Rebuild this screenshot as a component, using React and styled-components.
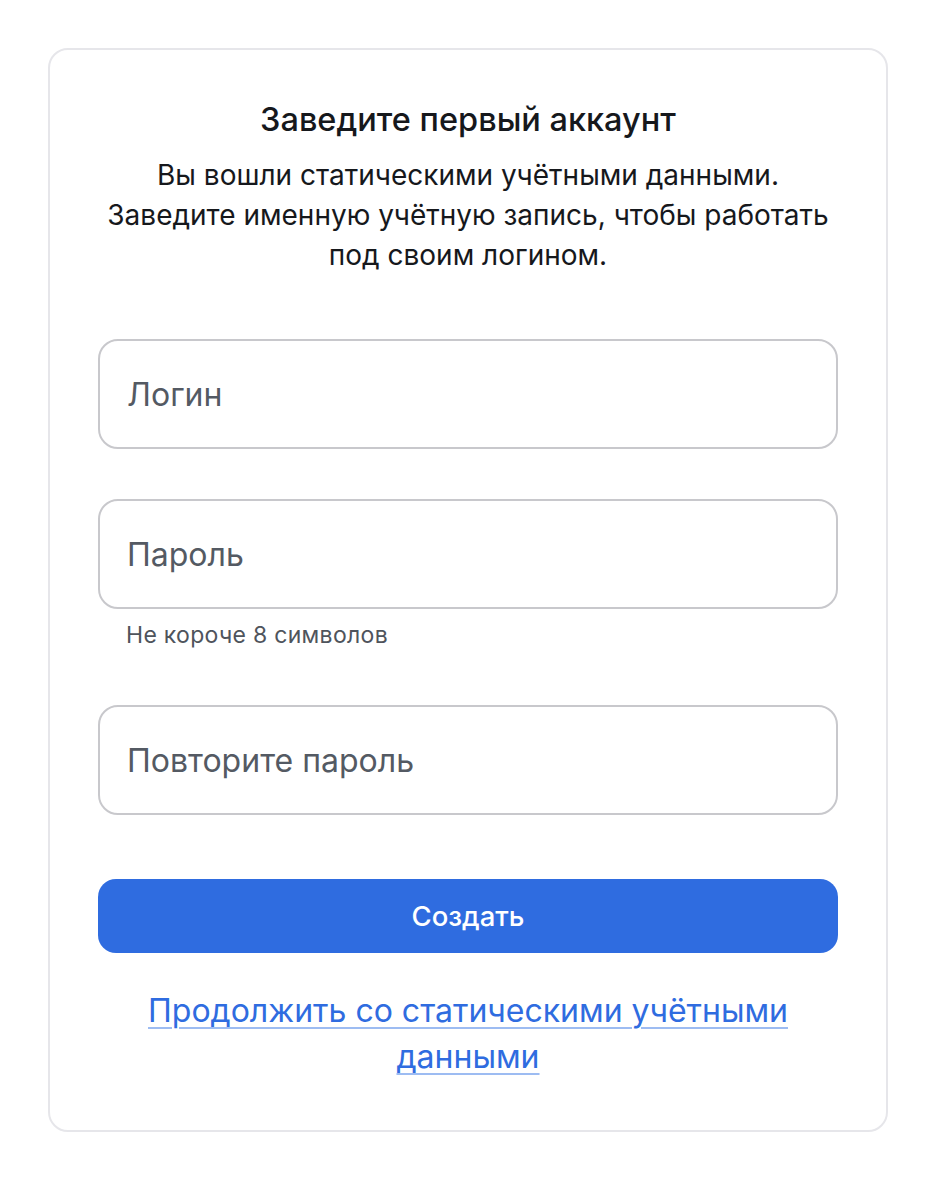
import React from 'react';
import styled, { createGlobalStyle } from 'styled-components';

const GlobalStyle = createGlobalStyle`
  body {
    margin: 0;
    background: #ffffff;
    font-family: 'Inter', 'Noto Sans', sans-serif;
  }
`

const Page = styled.div`
  padding: 48px;
`

const Card = styled.div`
  width: 840px;
  box-sizing: border-box;
  border: 2px solid #e6e6ea;
  border-radius: 20px;
  background: #fff;
  padding: 48px 48px 50px;
  display: flex;
  flex-direction: column;
  align-items: stretch;
`

const Title = styled.h1`
  margin: 0;
  font-size: 32.5px;
  font-weight: 500;
  color: #16181c;
  text-align: center;
  line-height: 44px;
`

const Subtitle = styled.p`
  margin: 13px 0 0;
  font-size: 28px;
  line-height: 40px;
  color: #16181c;
  text-align: center;
`

const Form = styled.form`
  margin-top: 64px;
  display: flex;
  flex-direction: column;
`

const Field = styled.div`
  display: flex;
  flex-direction: column;
  margin-bottom: ${p => (p.$hint ? '55px' : '50px')};
`

const Input = styled.input`
  height: 110px;
  box-sizing: border-box;
  border: 2px solid #c8c8cc;
  border-radius: 20px;
  padding: 0 27px;
  font-family: 'Inter', 'Noto Sans', sans-serif;
  font-size: 32px;
  color: #16181c;
  outline: none;
  &::placeholder {
    color: #545a63;
  }
`

const Hint = styled.span`
  margin-top: 11px;
  padding-left: 28px;
  font-size: 23px;
  letter-spacing: 0.3px;
  line-height: 30px;
  color: #4f545c;
`

const Submit = styled.button`
  margin-top: 14px;
  height: 74px;
  border: none;
  border-radius: 18px;
  background: #2f6ce0;
  color: #fff;
  font-family: 'Inter', 'Noto Sans', sans-serif;
  font-size: 27.5px;
  font-weight: 500;
  cursor: pointer;
`

const AltLink = styled.a`
  margin: 35px auto 0;
  max-width: 680px;
  text-align: center;
  font-size: 32px;
  line-height: 46px;
  color: #2f6ce0;
  text-decoration: underline;
  text-decoration-color: #9dbcf2;
  text-decoration-thickness: 2px;
  text-underline-offset: 5px;
  cursor: pointer;
`

const App = () => {
  return (
    <Page>
      <GlobalStyle />
      <Card>
        <Title>Заведите первый аккаунт</Title>
        <Subtitle>
          Вы вошли статическими учётными данными.<br />
          Заведите именную учётную запись, чтобы работать<br />
          под своим логином.
        </Subtitle>
        <Form onSubmit={e => e.preventDefault()}>
          <Field>
            <Input placeholder="Логин" />
          </Field>
          <Field $hint>
            <Input type="password" placeholder="Пароль" />
            <Hint>Не короче 8 символов</Hint>
          </Field>
          <Field>
            <Input type="password" placeholder="Повторите пароль" />
          </Field>
          <Submit type="submit">Создать</Submit>
        </Form>
        <AltLink>Продолжить со статическими учётными данными</AltLink>
      </Card>
    </Page>
  );
};

export default App;
